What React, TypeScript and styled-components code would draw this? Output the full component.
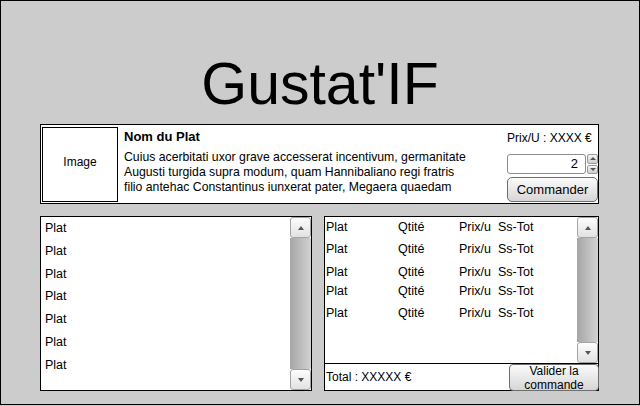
import React from "react";
import styled, { createGlobalStyle } from "styled-components";

const GlobalStyle = createGlobalStyle`
  html, body {
    margin: 0;
    padding: 0;
    background: #cccccc;
    font-family: "Liberation Sans", Arial, sans-serif;
    font-size: 12px;
    color: #000;
  }
  * {
    box-sizing: border-box;
  }
`;

const Frame = styled.div`
  width: 640px;
  height: 405px;
  border: 1px solid #000;
  background: #cccccc;
  display: flex;
  flex-direction: column;
  padding: 0 40px 0 39px;
`;

const Title = styled.h1`
  margin: 54px 0 0;
  height: 69px;
  font-size: 59px;
  line-height: 59px;
  font-weight: normal;
  text-align: center;
  padding-left: 1px;
`;

const DishPanel = styled.div`
  height: 80px;
  background: #fff;
  border: 1px solid #000;
  display: flex;
  align-items: flex-start;
  padding: 2px 0 0 1px;
`;

const ImageBox = styled.div`
  width: 76px;
  height: 75px;
  flex-shrink: 0;
  border: 1px solid #000;
  display: flex;
  align-items: center;
  justify-content: center;
  padding-bottom: 6px;
`;

const Info = styled.div`
  flex: 1;
  min-width: 0;
  padding: 2px 0 0 6px;
  white-space: nowrap;
`;

const DishName = styled.div`
  font-size: 13px;
  font-weight: bold;
  line-height: 16px;
`;

const Description = styled.p`
  margin: 5px 0 0;
  line-height: 15px;
  font-size: 12.25px;
`;

const OrderColumn = styled.div`
  width: 91px;
  flex-shrink: 0;
  display: flex;
  flex-direction: column;
  align-items: stretch;
`;

const UnitPrice = styled.div`
  line-height: 16px;
  margin-top: 3px;
  text-align: right;
  padding-right: 10px;
  white-space: nowrap;
`;

const SpinnerRow = styled.div`
  display: flex;
  margin-top: 8px;
  height: 20px;
`;

const QtyField = styled.div`
  flex: 1;
  border: 1px solid #8c8c8c;
  border-radius: 3px;
  background: #fff;
  text-align: right;
  padding: 0 7px;
  font-size: 13px;
  line-height: 18px;
`;

const SpinButtons = styled.div`
  width: 11px;
  margin-left: 1px;
  display: flex;
  flex-direction: column;
  gap: 1px;
`;

const SpinButton = styled.div<{ $down?: boolean }>`
  flex: 1;
  border: 1px solid #9a9a9a;
  border-radius: 2px;
  background: linear-gradient(#f4f4f4, #cfcfcf);
  display: flex;
  align-items: center;
  justify-content: center;
  &::after {
    content: "";
    border-left: 3px solid transparent;
    border-right: 3px solid transparent;
    ${(p) =>
      p.$down
        ? "border-top: 3px solid #555;"
        : "border-bottom: 3px solid #555;"}
  }
`;

const Button = styled.div<{ $height: number }>`
  height: ${(p) => p.$height}px;
  border: 1px solid #6e6e6e;
  border-radius: 5px;
  background: linear-gradient(#fbfbfb, #d6d6d6);
  display: flex;
  flex-direction: column;
  align-items: center;
  justify-content: center;
  text-align: center;
`;

const CommandButton = styled(Button)`
  margin-top: 3px;
  font-size: 13px;
`;

const BottomRow = styled.div`
  display: flex;
  gap: 12px;
  margin-top: 12px;
  height: 175px;
`;

const ListPanel = styled.div<{ $width: number }>`
  width: ${(p) => p.$width}px;
  background: #fff;
  border: 1px solid #000;
  display: flex;
  flex-direction: column;
`;

const ListBody = styled.div`
  flex: 1;
  display: flex;
  min-height: 0;
`;

const Items = styled.div`
  flex: 1;
  padding-left: 4px;
`;

const Item = styled.div`
  height: 22.8px;
  line-height: 22.8px;
  font-size: 12.5px;
`;

const Scrollbar = styled.div`
  width: 21px;
  display: flex;
  flex-direction: column;
`;

const ScrollButton = styled.div<{ $down?: boolean }>`
  height: 21px;
  border: 1px solid #a4a4a4;
  border-radius: 3px;
  background: linear-gradient(#fdfdfd, #e2e2e2);
  display: flex;
  align-items: center;
  justify-content: center;
  &::after {
    content: "";
    border-left: 3px solid transparent;
    border-right: 3px solid transparent;
    ${(p) =>
      p.$down
        ? "border-top: 4px solid #555;"
        : "border-bottom: 4px solid #555;"}
  }
`;

const Track = styled.div`
  flex: 1;
  background: linear-gradient(to right, #a6a6a6, #d2d2d2);
`;

const OrderRows = styled.div`
  flex: 1;
  padding-left: 1px;
`;

const OrderRow = styled.div<{ $offset: number }>`
  display: grid;
  grid-template-columns: 72px 61px 39px auto;
  margin-top: ${(p) => p.$offset}px;
  line-height: 16px;
  font-size: 12.5px;
`;

const Footer = styled.div`
  height: 27px;
  border-top: 1px solid #000;
  display: flex;
  align-items: center;
  justify-content: space-between;
  padding-left: 1px;
`;

const ValidateButton = styled(Button)`
  width: 90px;
  margin-right: -1px;
  margin-bottom: -1px;
  line-height: 14px;
  border-radius: 4px;
  padding-top: 1px;
`;

const dishes = ["Plat", "Plat", "Plat", "Plat", "Plat", "Plat", "Plat"];
const orderOffsets = [2, 6, 7, 3, 6];

const Scroll: React.FC = () => (
  <Scrollbar>
    <ScrollButton />
    <Track />
    <ScrollButton $down />
  </Scrollbar>
);

export default function App() {
  return (
    <>
      <GlobalStyle />
      <Frame>
        <Title>Gustat'IF</Title>
        <DishPanel>
          <ImageBox>Image</ImageBox>
          <Info>
            <DishName>Nom du Plat</DishName>
            <Description>
              Cuius acerbitati uxor grave accesserat incentivum, germanitate
              <br />
              Augusti turgida supra modum, quam Hannibaliano regi fratris
              <br />
              filio antehac Constantinus iunxerat pater, Megaera quaedam
            </Description>
          </Info>
          <OrderColumn>
            <UnitPrice>Prix/U : XXXX €</UnitPrice>
            <SpinnerRow>
              <QtyField>2</QtyField>
              <SpinButtons>
                <SpinButton />
                <SpinButton $down />
              </SpinButtons>
            </SpinnerRow>
            <CommandButton $height={25}>Commander</CommandButton>
          </OrderColumn>
        </DishPanel>
        <BottomRow>
          <ListPanel $width={272}>
            <ListBody>
              <Items>
                {dishes.map((d, i) => (
                  <Item key={`p${i}`}>{d}</Item>
                ))}
              </Items>
              <Scroll />
            </ListBody>
          </ListPanel>
          <ListPanel $width={275}>
            <ListBody>
              <OrderRows>
                {orderOffsets.map((o, i) => (
                  <OrderRow key={`r${i}`} $offset={o}>
                    <span>Plat</span>
                    <span>Qtité</span>
                    <span>Prix/u</span>
                    <span>Ss-Tot</span>
                  </OrderRow>
                ))}
              </OrderRows>
              <Scroll />
            </ListBody>
            <Footer>
              <span>Total : XXXXX €</span>
              <ValidateButton $height={27}>
                <span>Valider la</span>
                <span>commande</span>
              </ValidateButton>
            </Footer>
          </ListPanel>
        </BottomRow>
      </Frame>
    </>
  );
}
